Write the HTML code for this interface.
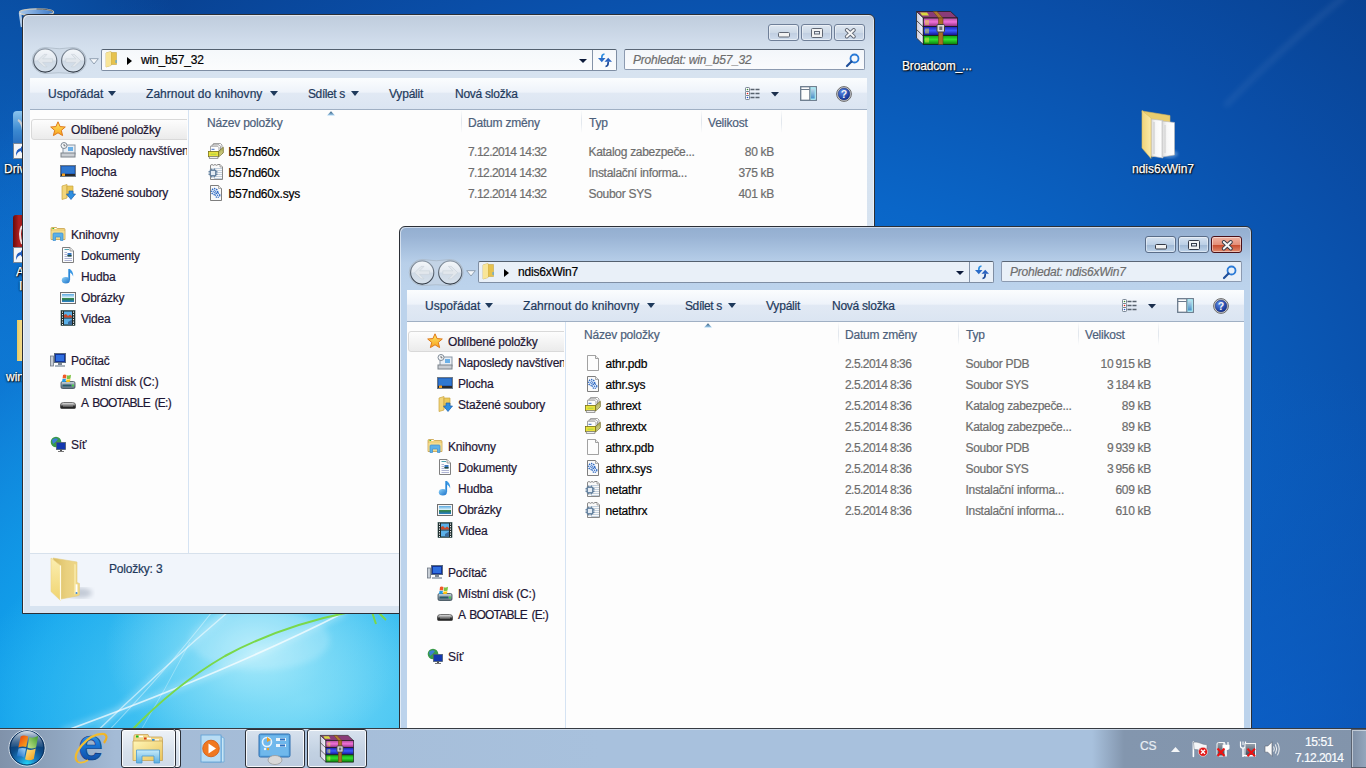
<!DOCTYPE html><html><head><meta charset="utf-8"><style>
*{margin:0;padding:0;box-sizing:border-box}
html,body{width:1366px;height:768px;overflow:hidden;font-family:"Liberation Sans", sans-serif;font-size:12px}
#desk{position:absolute;left:0;top:0;width:1366px;height:768px;overflow:hidden;
 background:
  radial-gradient(ellipse 150px 110px at 255px 650px, rgba(185,240,252,.85) 0%, rgba(150,228,248,.5) 50%, rgba(120,215,245,0) 100%),
  radial-gradient(ellipse 330px 200px at 300px 700px, rgba(110,214,246,1) 0%, rgba(70,196,242,.8) 50%, rgba(30,170,236,0) 100%),
  radial-gradient(ellipse 760px 720px at 330px 780px, rgba(34,184,242,1) 0%, rgba(18,166,238,.97) 42%, rgba(14,124,214,.62) 70%, rgba(10,80,180,0) 100%),
  radial-gradient(ellipse 420px 420px at 1250px 780px, rgba(12,100,208,.75) 0%, rgba(12,96,200,.4) 50%, rgba(10,90,190,0) 100%),
  radial-gradient(ellipse 280px 760px at 0px 600px, rgba(16,130,222,1) 0%, rgba(13,112,210,.75) 50%, rgba(10,90,190,0) 100%),
  radial-gradient(ellipse 900px 650px at 760px 450px, #0c7ad8 0%, #0a66c8 40%, #0a4ea8 75%, #08408f 100%);}
.t{position:absolute;white-space:nowrap;line-height:14px;font-size:12px;-webkit-text-stroke:0.2px currentColor;letter-spacing:-0.2px}
.ic{position:absolute;overflow:visible}
.win{position:absolute;border:1px solid #2b2f36;border-radius:6px 6px 0 0;overflow:hidden;box-shadow:inset 1px 1px 0 rgba(255,255,255,.55),inset -1px 0 0 rgba(255,255,255,.4)}
.win .t, .win .ic, .win div{}
.cb{position:absolute;border:1px solid #6f7f98;border-radius:3px;background:linear-gradient(to bottom,#dfe7f1 0%,#cdd9e7 50%,#bfcde0 51%,#cfdcec 100%);box-shadow:inset 0 0 0 1px rgba(255,255,255,.45)}
.cbact{background:linear-gradient(to bottom,#d6e2f0 0%,#bcd0e6 50%,#9fb8d4 51%,#bed3ea 100%);border-color:#5a6d88}
.cbred{border-color:#4a1018;background:linear-gradient(to bottom,#f0b2a2 0%,#e4907a 50%,#c6482a 51%,#e08a6e 100%)}
.navpill{position:absolute;border-radius:13px;background:linear-gradient(to bottom,rgba(255,255,255,.15),rgba(120,140,170,.25));border:1px solid rgba(120,135,160,.5)}
.navbtn{position:absolute;border-radius:50%;border:1.5px solid #4a5564;background:linear-gradient(to bottom,#f2f5f9 0%,#e0e7ef 50%,#cad5e1 52%,#dde6ef 100%)}
.addr{position:absolute;border:1px solid #7f8ea3;border-top-color:#53606f;border-radius:2px;background:linear-gradient(to bottom,#f5f8fb,#fbfcfd)}
.srch{position:absolute;border:1px solid #8c9ab0;border-top-color:#5a6676;border-radius:2px;background:linear-gradient(to bottom,#f3f6fa,#fafbfd)}
.client{position:absolute;background:#fdfdfd;overflow:hidden}
.tb{position:absolute;left:0;top:0;width:837px;height:32px;background:linear-gradient(to bottom,#fbfdfe 0%,#eef3fa 45%,#e1e9f4 50%,#dbe5f2 100%);border-bottom:1px solid #a0b0c4}
.navpane{position:absolute;left:0;top:32px;width:158px;height:443px;background:#fdfdfd}
.navclip{position:absolute;left:0;top:0;width:157px;height:475px;overflow:hidden}
.favbar{position:absolute;left:1px;top:41px;width:162px;height:21px;border:1px solid #d9d9d9;border-radius:3px;background:linear-gradient(to bottom,#fdfdfd,#ebebeb)}
.navdiv{position:absolute;left:158px;top:32px;width:1px;height:443px;background:#d5e3f3}
.content{position:absolute;left:0;top:0;width:837px;height:475px}
.hsep{position:absolute;top:32px;width:1px;height:23px;background:linear-gradient(to bottom,#fdfdfd,#e3e8ee 40%,#e3e8ee 60%,#fdfdfd)}
#tbar{position:absolute;left:0;top:728px;width:1366px;height:40px;background:linear-gradient(to right,#8092aa 0px,#90a6c0 60px,#a4bbd6 115px,#a8c1dd 600px,#a8c1dd 1092px,#8396ae 1124px,#8294ab 1366px)}
.tbtop{position:absolute;left:0;top:0;width:1366px;height:2px;border-top:1px solid #363b42;background:rgba(220,230,242,.75)}
.tbtn{position:absolute;top:729px;height:39px;border:1px solid #2c3038;border-radius:3px;background:linear-gradient(to bottom,#eef2f7,#d6e0eb 60%,#d0dbe8);box-shadow:inset 0 0 0 1px rgba(255,255,255,.85)}
.tbd{background:linear-gradient(to bottom,#d8e2ee,#c2d1e2 60%,#bccbde)}
.showdesk{position:absolute;left:1351px;top:729px;width:15px;height:39px;border:1px solid #5a6270;border-right:none;background:linear-gradient(to right,#7d8ea5,#95a6bc);box-shadow:inset 1px 1px 0 rgba(255,255,255,.5)}
.dt{position:absolute;white-space:nowrap;color:#fff;font-size:12px;line-height:14px;-webkit-text-stroke:0.25px #fff;text-shadow:0 1px 2px #000,0 0 2px rgba(0,0,0,.9),1px 1px 1px rgba(0,0,0,.8)}
.status{position:absolute;left:0;top:475px;width:837px;height:53px;background:#f1f5fb;border-top:1px solid #d7e1ec}
</style></head><body><div id="desk"><svg class="ic" style="left:0;top:0" width="1366" height="768" viewBox="0 0 1366 768"><defs><filter id="blur1"><feGaussianBlur stdDeviation="0.6"/></filter><filter id="blur3"><feGaussianBlur stdDeviation="3"/></filter></defs><g filter="url(#blur3)" fill="none" opacity=".5"><path d="M62 732 Q150 700 220 670 Q290 640 345 612" stroke="#ffffff" stroke-opacity=".6" stroke-width="6"/><path d="M88 740 Q160 670 228 612" stroke="#ffffff" stroke-opacity=".5" stroke-width="5"/><ellipse cx="260" cy="640" rx="70" ry="30" fill="#ffffff" fill-opacity=".35"/><path d="M1345 -4 Q1290 40 1225 106" stroke="#ffffff" stroke-opacity=".25" stroke-width="3"/></g><g filter="url(#blur1)" fill="none"><path d="M62 732 Q150 700 220 670 Q290 640 345 612" stroke="#ffffff" stroke-opacity=".7" stroke-width="1.8"/><path d="M88 740 Q160 670 228 612" stroke="#ffffff" stroke-opacity=".55" stroke-width="1.4"/><path d="M140 732 Q165 690 190 642" stroke="#ffffff" stroke-opacity=".3" stroke-width="1"/><path d="M100 740 Q165 672 212 612" stroke="#ffffff" stroke-opacity=".4" stroke-width="1.1"/><path d="M130 732 Q175 685 225 656 Q280 626 350 612" stroke="#7ad84a" stroke-width="2"/><path d="M372 612 L376 624 M378 612 L386 620" stroke="#7ad84a" stroke-width="2"/></g></svg><svg class="ic" style="left:17px;top:7px" width="40" height="22" viewBox="0 0 40 22"><defs><linearGradient id="rbg" x1="0" y1="0" x2="1" y2="0"><stop offset="0" stop-color="#a8c8ec"/><stop offset="1" stop-color="#3a78c8"/></linearGradient></defs><ellipse cx="19.5" cy="5.2" rx="17" ry="3.4" fill="url(#rbg)" stroke="#c8c8c0" stroke-width="1.3"/><path d="M19.5 2 Q33 2 36 4.5" fill="none" stroke="#5a5a58" stroke-width=".9"/><path d="M3 6 L5 20" stroke="#d8e8f8" stroke-width="2.5" opacity=".8"/></svg><svg class="ic" style="left:916px;top:11px;" width="42" height="34" viewBox="0 0 42 34"><defs><linearGradient id="rm" x1="0" y1="0" x2="0" y2="1"><stop offset="0" stop-color="#b0509c"/><stop offset=".45" stop-color="#f070d8"/><stop offset="1" stop-color="#8a2a78"/></linearGradient><linearGradient id="rb" x1="0" y1="0" x2="0" y2="1"><stop offset="0" stop-color="#2020b0"/><stop offset=".45" stop-color="#3a5aff"/><stop offset="1" stop-color="#10108a"/></linearGradient><linearGradient id="rgn" x1="0" y1="0" x2="0" y2="1"><stop offset="0" stop-color="#10a010"/><stop offset=".45" stop-color="#30e030"/><stop offset="1" stop-color="#0a7a0a"/></linearGradient><linearGradient id="rs" x1="0" y1="0" x2="1" y2="0"><stop offset="0" stop-color="#c8c8d8"/><stop offset="1" stop-color="#f8f8ff"/></linearGradient></defs><path d="M0.5 0.5 H34.6 L41.5 7 H7.3Z" fill="#8a3c78" stroke="#2a1a20" stroke-width=".8"/><path d="M4 1.5 H11 L13 4.5 H6Z" fill="#d8d840"/><path d="M0.5 0.5 L7.3 7 V33.5 L0.5 27Z" fill="url(#rs)" stroke="#2a2a2a" stroke-width=".8"/><path d="M0.5 9.5 L7.3 16 M0.5 18.5 L7.3 25" stroke="#2a2a2a" stroke-width=".8"/><rect x="7.3" y="7" width="34.2" height="8.6" fill="url(#rm)" stroke="#1a1a1a" stroke-width=".8"/><rect x="7.3" y="15.6" width="34.2" height="8.9" fill="url(#rb)" stroke="#1a1a1a" stroke-width=".8"/><rect x="7.3" y="24.5" width="34.2" height="9" fill="url(#rgn)" stroke="#1a1a1a" stroke-width=".8"/><path d="M10 9 V14 M12 9 V14 M10 17.5 V22.5 M12 17.5 V22.5 M10 26.5 V31.5 M12 26.5 V31.5" stroke="#e8e040" stroke-width="1"/><path d="M17 0.5 L21 0.5 L27 7 H22.5Z" fill="#b07830" stroke="#5a3a10" stroke-width=".5"/><rect x="22.5" y="7" width="4.5" height="26.5" fill="#a86e28" stroke="#5a3a10" stroke-width=".5"/><rect x="21" y="13.5" width="7.5" height="7.5" rx="1" fill="#d8d8d8" stroke="#404040" stroke-width="1"/><rect x="23.3" y="15.5" width="3" height="3.5" fill="#707070"/></svg><div class="dt" style="left:902px;top:59px;letter-spacing:-0.15px">Broadcom_...</div><svg class="ic" style="left:1140px;top:109px" width="40" height="52" viewBox="0 0 40 52"><defs><linearGradient id="dff" x1="0" y1="0" x2="1" y2="0"><stop offset="0" stop-color="#f0d47a"/><stop offset="1" stop-color="#fbeaa8"/></linearGradient><linearGradient id="dpp" x1="0" y1="0" x2="1" y2="0"><stop offset="0" stop-color="#d8d8d8"/><stop offset=".4" stop-color="#f8f8f8"/><stop offset="1" stop-color="#ffffff"/></linearGradient><filter id="dsh"><feGaussianBlur stdDeviation="1.5"/></filter></defs><ellipse cx="30" cy="45" rx="8" ry="4" fill="#bfe0ff" opacity=".35" filter="url(#dsh)"/><path d="M2 2 L30 6.5 V41 L12 48Z" fill="#e9cd6e" stroke="#cfb060" stroke-width=".6"/><path d="M11 10 L23 11.5 V49 L11 47Z" fill="url(#dpp)" stroke="#b8b8b8" stroke-width=".6"/><path d="M14 13 V45" stroke="#cfcfcf" stroke-width="1.2"/><path d="M22 12 L34.5 13.5 V46 L22 48Z" fill="url(#dpp)" stroke="#b8b8b8" stroke-width=".6"/><path d="M25 16 V44" stroke="#d4d4d4" stroke-width="1.2"/><path d="M2 1.5 L11 9 V49.5 L2 39Z" fill="url(#dff)" stroke="#d8bc62" stroke-width=".6"/></svg><div class="dt" style="left:1132px;top:162px">ndis6xWin7</div><div class="ic" style="left:13px;top:111px;width:12px;height:33px;background:linear-gradient(to bottom,#8ac4ee,#3a88d0 60%,#2a70c0);border-radius:4px 0 0 0"></div><svg class="ic" style="left:17px;top:118px" width="6" height="14" viewBox="0 0 6 14"><path d="M1 2 Q5 4 6 12" stroke="#c8ccd2" stroke-width="2.2" fill="none"/></svg><svg class="ic" style="left:13px;top:143px" width="10" height="16" viewBox="0 0 10 16"><rect x="0.5" y="0.5" width="11" height="15" fill="#f4f6f8" stroke="#7a8898"/><path d="M3 13 Q2.5 6 8 5 V3 L11 6.5 L8 10 V8 Q4.5 8.5 3 13Z" fill="#1e5cc0"/></svg><div class="dt" style="left:4px;top:162px">Drivers</div><div class="ic" style="left:13px;top:215px;width:12px;height:32px;background:linear-gradient(to right,#6a0a0a,#b02020 50%,#8a1010);border-radius:3px 0 0 0"></div><svg class="ic" style="left:17px;top:225px" width="6" height="20" viewBox="0 0 6 20"><path d="M5 1 Q1 8 5 19" stroke="#f0e0e0" stroke-width="2" fill="none"/></svg><svg class="ic" style="left:13px;top:247px" width="10" height="16" viewBox="0 0 10 16"><rect x="0.5" y="0.5" width="11" height="15" fill="#f4f6f8" stroke="#7a8898"/><path d="M3 13 Q2.5 6 8 5 V3 L11 6.5 L8 10 V8 Q4.5 8.5 3 13Z" fill="#1e5cc0"/></svg><div class="dt" style="left:16px;top:265px">A</div><div class="dt" style="left:19px;top:279px">I</div><div class="ic" style="left:17px;top:320px;width:8px;height:41px;background:linear-gradient(to right,#e8c860,#fbe9a8)"></div><div class="dt" style="left:6px;top:370px">win_b57_32</div><div class="win" style="left:22px;top:14px;width:853px;height:600px;background:linear-gradient(to bottom,#bfccdd 0px,#c5d2e2 10px,#cfdbea 25px,#d5e1ee 36px,#d7e3f0 60px,#d8e4f1 600px)"><div style="position:absolute;left:-1px;top:-1px;width:853px;height:600px"><div class="cb" style="left:746px;top:10px;width:31px;height:17px"><svg style="position:absolute;left:9px;top:7px" width="12" height="6" viewBox="0 0 12 6"><rect x="0.5" y="0.5" width="11" height="4.5" rx="1" fill="#f2f2f2" stroke="#5f6673" stroke-width="1"/></svg></div><div class="cb" style="left:779px;top:10px;width:31px;height:17px"><svg style="position:absolute;left:9px;top:3px" width="12" height="10" viewBox="0 0 12 10"><rect x="0.5" y="0.5" width="11" height="9" rx="1" fill="#f2f2f2" stroke="#5f6673" stroke-width="1"/><rect x="3.5" y="3.5" width="5" height="2.5" fill="#e8eef6" stroke="#5f6673" stroke-width="1"/></svg></div><div class="cb" style="left:812px;top:10px;width:31px;height:17px"><svg style="position:absolute;left:9px;top:3px" width="13" height="11" viewBox="0 0 13 11"><path d="M2.8 2 L9.8 8.6 M9.8 2 L2.8 8.6" stroke="#5f6673" stroke-width="3.8" stroke-linecap="round"/><path d="M2.8 2 L9.8 8.6 M9.8 2 L2.8 8.6" stroke="#f6f6f6" stroke-width="2" stroke-linecap="round"/></svg></div><svg class="ic" style="left:8px;top:32px" width="72" height="30" viewBox="0 0 72 30"><defs><linearGradient id="nbi" x1="0" y1="0" x2="0" y2="1"><stop offset="0" stop-color="#f4f7fa"/><stop offset=".48" stop-color="#e3e9f0"/><stop offset=".52" stop-color="#cfdae6"/><stop offset="1" stop-color="#d8e2ec"/></linearGradient><linearGradient id="nsi" x1="0" y1="0" x2="0" y2="1"><stop offset="0" stop-color="#8e9aa8"/><stop offset="1" stop-color="#2e3742"/></linearGradient></defs><path d="M15.2 1.5 Q29.2 4 43.2 1.5 A13 13 0 0 1 43.2 27.5 Q29.2 26 15.2 27.5 A13 13 0 0 1 15.2 1.5Z" fill="#c9d5e2" fill-opacity=".6" stroke="#a7b3c0" stroke-opacity=".7" stroke-width="1"/><circle cx="15.2" cy="14.5" r="11.6" fill="url(#nbi)" stroke="url(#nsi)" stroke-width="1.1"/><circle cx="43.2" cy="14.5" r="11.6" fill="url(#nbi)" stroke="url(#nsi)" stroke-width="1.1"/><path d="M7.6 14.8 L14 8.4 L17 8.4 L12.6 12.8 H22.6 V16.4 H12.6 L17 20.8 L14 20.8Z" fill="#e2e7ec" stroke="#c8d0d8" stroke-width=".6"/><path d="M50.8 14.8 L44.4 8.4 L41.4 8.4 L45.8 12.8 H35.8 V16.4 H45.8 L41.4 20.8 L44.4 20.8Z" fill="#e2e7ec" stroke="#c8d0d8" stroke-width=".6"/></svg><svg class="ic" style="left:67px;top:44px" width="10" height="7" viewBox="0 0 10 7"><path d="M0.7 0.7 H9.3 L5 6Z" fill="#f4f7fa" stroke="#8898aa" stroke-width=".9"/></svg><div class="addr" style="left:79px;top:35px;width:516px;height:22px;"></div><svg class="ic" style="left:83px;top:37px;" width="13" height="16" viewBox="0 0 13 16"><path d="M1 2 L6 0.5 V14.5 L1 16Z" fill="#f5df8a" stroke="#c6a84a" stroke-width=".6"/><path d="M6 1.5 H11.5 V13.5 H6Z" fill="#e6c24e" stroke="#c6a84a" stroke-width=".6"/><path d="M1 2 L6 0.5 V14.5 L1 16Z" fill="#f8e598"/><rect x="10.5" y="9" width="1.2" height="3" fill="#5aa8e0"/></svg><svg class="ic" style="left:105px;top:43px" width="5" height="8" viewBox="0 0 5 8"><path d="M0 0 L5 4 L0 8Z" fill="#000"/></svg><div class="t " style="left:119px;top:39px;color:#000;font-size:12px;">win_b57_32</div><svg class="ic" style="left:557px;top:45px" width="8" height="4" viewBox="0 0 8 4"><path d="M0 0 H8 L4 4Z" fill="#0c1a3a"/></svg><div style="position:absolute;left:570px;top:36px;width:1px;height:20px;background:#8493a8"></div><svg class="ic" style="left:575px;top:38px" width="16" height="16" viewBox="0 0 16 16"><path d="M7.5 2 Q4.8 2.2 4.8 5.6 L4.8 6.2" fill="none" stroke="#2f8ee0" stroke-width="1.7"/><path d="M1 6 H8.5 L4.8 10.3Z" fill="#2a6cc8"/><path d="M8.5 14.5 Q11.2 14.3 11.2 10.6 L11.2 9.6" fill="none" stroke="#1c4a9a" stroke-width="1.7"/><path d="M7.5 9.8 H15 L11.2 5.8Z" fill="#2a62c0"/></svg><div class="srch" style="left:602px;top:35px;width:241px;height:21px;"></div><div class="t " style="left:611px;top:39px;color:#6d6d6d;font-size:12px;font-style:italic;letter-spacing:-0.2px">Prohledat: win_b57_32</div><svg class="ic" style="left:824px;top:39px" width="14" height="14" viewBox="0 0 14 14"><circle cx="8.5" cy="5.5" r="4" fill="none" stroke="#2a7ad6" stroke-width="1.8"/><path d="M5.5 8.5 L1 13" stroke="#1f4f9a" stroke-width="2.2" stroke-linecap="round"/></svg><div class="client" style="left:8px;top:64px;width:837px;height:528px"><div class="tb"></div><div class="t " style="left:18px;top:9px;color:#1e395b;font-size:12px;letter-spacing:0px">Uspořádat</div><div class="t " style="left:116px;top:9px;color:#1e395b;font-size:12px;letter-spacing:0.05px">Zahrnout do knihovny</div><div class="t " style="left:278px;top:9px;color:#1e395b;font-size:12px;letter-spacing:-0.4px">Sdílet s</div><div class="t " style="left:359px;top:9px;color:#1e395b;font-size:12px;letter-spacing:-0.2px">Vypálit</div><div class="t " style="left:425px;top:9px;color:#1e395b;font-size:12px;letter-spacing:-0.25px">Nová složka</div><svg class="ic" style="left:78px;top:13px" width="8" height="5" viewBox="0 0 8 5"><path d="M0 0 H8 L4 5Z" fill="#1e395b"/></svg><svg class="ic" style="left:240px;top:13px" width="8" height="5" viewBox="0 0 8 5"><path d="M0 0 H8 L4 5Z" fill="#1e395b"/></svg><svg class="ic" style="left:320.5px;top:13px" width="8" height="5" viewBox="0 0 8 5"><path d="M0 0 H8 L4 5Z" fill="#1e395b"/></svg><svg class="ic" style="left:715px;top:9px" width="16" height="14" viewBox="0 0 16 14"><g fill="#fff" stroke="#6a7888" stroke-width=".9"><rect x="0.5" y="0.5" width="4" height="4" rx=".8"/><rect x="0.5" y="4.5" width="4" height="4" rx=".8"/><rect x="0.5" y="8.5" width="4" height="4" rx=".8"/></g><circle cx="2.5" cy="2.5" r=".8" fill="#3a8a3a"/><circle cx="2.5" cy="6.5" r=".8" fill="#e02020"/><circle cx="2.5" cy="10.5" r=".8" fill="#2050d0"/><path d="M5.5 2.5h4M10.5 2.5h4M5.5 6.5h4M10.5 6.5h4M5.5 10.5h4M10.5 10.5h4" stroke="#58626e" stroke-width="1.6"/></svg><svg class="ic" style="left:740.5px;top:13.5px" width="8" height="5" viewBox="0 0 8 5"><path d="M0 0 H8 L4 4.5Z" fill="#1a2e4c"/></svg><svg class="ic" style="left:770px;top:8px" width="17" height="15" viewBox="0 0 17 15"><defs><linearGradient id="pvg" x1="0" y1="0" x2="0" y2="1"><stop offset="0" stop-color="#c0dcea"/><stop offset="1" stop-color="#4a90c8"/></linearGradient></defs><rect x="0.7" y="0.7" width="15.6" height="13.6" fill="#fdfdfd" stroke="#6a7a8c" stroke-width="1.3"/><path d="M1 3.5 H9.5" stroke="#6a7a8c" stroke-width="1"/><rect x="10" y="1.3" width="5.7" height="12.4" fill="#9ae8f6"/><rect x="11" y="2.5" width="3.7" height="10" fill="url(#pvg)"/><path d="M9.8 1 V14" stroke="#6a7a8c" stroke-width="1.2"/></svg><svg class="ic" style="left:805px;top:7px" width="18" height="18" viewBox="0 0 18 18"><defs><radialGradient id="hg" cx=".35" cy=".3" r=".8"><stop offset="0" stop-color="#5a8ae8"/><stop offset="1" stop-color="#0c2a8a"/></radialGradient></defs><circle cx="9" cy="9" r="7.4" fill="#d4d4d4" stroke="#6a6a6a" stroke-width="1"/><circle cx="9" cy="9" r="5.9" fill="url(#hg)" stroke="#1a2a6a" stroke-width=".5"/><text x="9" y="12.8" font-family="Liberation Sans" font-weight="bold" font-size="10.5" fill="#f4f4f4" text-anchor="middle">?</text></svg><div class="navpane"></div><div class="navclip"><div class="favbar"></div><svg class="ic" style="left:20px;top:43px;" width="16" height="16" viewBox="0 0 16 16"><defs><linearGradient id="gs" x1="0" y1="0" x2="0" y2="1"><stop offset="0" stop-color="#ffe96a"/><stop offset="1" stop-color="#f7a21b"/></linearGradient></defs><path d="M8 0.8 L10.1 5.6 L15.3 6 L11.3 9.4 L12.6 14.6 L8 11.8 L3.4 14.6 L4.7 9.4 L0.7 6 L5.9 5.6 Z" fill="url(#gs)" stroke="#e07818" stroke-width="1"/></svg><div class="t " style="left:41px;top:45px;color:#1e1634;font-size:12px;">Oblíbené položky</div><svg class="ic" style="left:30px;top:64px;" width="16" height="16" viewBox="0 0 16 16"><rect x="3" y="3" width="12" height="9" fill="#e8eef5" stroke="#8a96a3"/><rect x="8" y="5" width="5" height="4" fill="#6ab0e8"/><rect x="1" y="11" width="14" height="4" fill="#c9cdd2" stroke="#7c838b"/><circle cx="4" cy="3.5" r="3" fill="#f4f6f8" stroke="#7f8a96"/><path d="M4 2 V3.8 H5.5" stroke="#555" fill="none" stroke-width=".8"/></svg><div class="t " style="left:51px;top:66px;color:#1e1634;font-size:12px;">Naposledy navštívené</div><svg class="ic" style="left:30px;top:85px;" width="16" height="16" viewBox="0 0 16 16"><rect x="0.5" y="2.5" width="15" height="11" fill="#1b4fa8" stroke="#6d7a88"/><rect x="1.5" y="3.5" width="13" height="7" fill="#2f78d0"/><rect x="1" y="11" width="14" height="2" fill="#2a2a2a"/><rect x="2" y="10.5" width="3" height="2.5" fill="#f5a020"/></svg><div class="t " style="left:51px;top:87px;color:#1e1634;font-size:12px;">Plocha</div><svg class="ic" style="left:30px;top:106px;" width="16" height="16" viewBox="0 0 16 16"><path d="M2 2 L7 0.5 L7 14 L2 15.5 Z" fill="#f2d57a" stroke="#c9a441" stroke-width=".7"/><path d="M7 2 H13 V12 H7 Z" fill="#ecc95a" stroke="#c9a441" stroke-width=".7"/><path d="M9 7 H13 V10 H15.5 L11 15.5 L6.5 10 H9 Z" fill="#2e8fe0" stroke="#1a5fb0" stroke-width=".7"/></svg><div class="t " style="left:51px;top:108px;color:#1e1634;font-size:12px;">Stažené soubory</div><svg class="ic" style="left:20px;top:148px;" width="16" height="16" viewBox="0 0 16 16"><path d="M1 2.5 Q1 1.5 2 1.5 H6.5 L7.5 2.5 H14 Q15 2.5 15 3.5 V13.5 H1Z" fill="#efd27c" stroke="#c9a24c" stroke-width=".8"/><rect x="2.5" y="2" width="1.5" height="1" fill="#30c030"/><path d="M4.5 2.5 H6.5" stroke="#fff" stroke-width="1"/><path d="M1.5 5 H14.5 V13 H1.5Z" fill="#f4dc8e"/><path d="M3 8 Q3 7 4 7 H12 Q13 7 13 8 V14.5 H10.5 V11 H5.5 V14.5 H3Z" fill="#5cb0e6" stroke="#3a8ed0" stroke-width=".7"/></svg><div class="t " style="left:41px;top:150px;color:#1e1634;font-size:12px;">Knihovny</div><svg class="ic" style="left:30px;top:169px;" width="16" height="16" viewBox="0 0 16 16"><path d="M2.5 0.5 H10 L13.5 4 V15.5 H2.5 Z" fill="#fbfcfd" stroke="#7f7f7f" stroke-width="1"/><path d="M10 0.5 V4 H13.5" fill="#eaeaea" stroke="#8a8a8a" stroke-width=".8"/><path d="M4.5 2.5 H9" stroke="#3a9aa8" stroke-width=".9"/><path d="M4.5 5.5 H7 M4.5 7.5 H7 M4.5 9.5 H7 M4.5 11.5 H12 M4.5 13.5 H12" stroke="#9aa0c8" stroke-width=".8"/><rect x="7.5" y="6" width="4" height="3.5" fill="#3a78c0"/><rect x="7.5" y="8" width="4" height="1.5" fill="#2a4a3a"/></svg><div class="t " style="left:51px;top:171px;color:#1e1634;font-size:12px;">Dokumenty</div><svg class="ic" style="left:30px;top:190px;" width="16" height="16" viewBox="0 0 16 16"><defs><linearGradient id="musg" x1="0" y1="0" x2="1" y2="1"><stop offset="0" stop-color="#8ad0f8"/><stop offset="1" stop-color="#1a70c8"/></linearGradient></defs><path d="M9.2 1 V12" stroke="#2a88d8" stroke-width="1.8"/><path d="M9.2 0.8 Q13.5 3 13.2 8.5 Q12.5 5.8 10 4.5Z" fill="#3a98e4"/><ellipse cx="5.8" cy="12.3" rx="4" ry="3.2" fill="url(#musg)"/></svg><div class="t " style="left:51px;top:192px;color:#1e1634;font-size:12px;">Hudba</div><svg class="ic" style="left:30px;top:211px;" width="16" height="16" viewBox="0 0 16 16"><defs><linearGradient id="picg" x1="0" y1="0" x2="0" y2="1"><stop offset="0" stop-color="#5aa8e0"/><stop offset=".45" stop-color="#d8f0f8"/><stop offset=".55" stop-color="#3a8a4a"/><stop offset=".7" stop-color="#2a7a6a"/><stop offset="1" stop-color="#2a80d0"/></linearGradient></defs><rect x="0.5" y="3.5" width="15" height="11" fill="#f4f6f8" stroke="#6f6f6f"/><rect x="2" y="5" width="12" height="8" fill="url(#picg)"/></svg><div class="t " style="left:51px;top:213px;color:#1e1634;font-size:12px;">Obrázky</div><svg class="ic" style="left:30px;top:232px;" width="16" height="16" viewBox="0 0 16 16"><rect x="1" y="0.5" width="14" height="15" fill="#1e2a2a" stroke="#2a4a4a" stroke-width=".6"/><rect x="4" y="1.5" width="8" height="6" fill="#5ab0e8"/><rect x="4" y="8.5" width="8" height="6" fill="#5ab0e8"/><path d="M4 5 L6 4 L8 6 L10 4.5 L12 6 V7.5 H4Z" fill="#c84a2a"/><path d="M8 12 L12 9.5 V14.5 H8Z" fill="#3a6a9a"/><path d="M2 1.5h1v1.2h-1zM2 4h1v1.2h-1zM2 6.5h1v1.2h-1zM2 9h1v1.2h-1zM2 11.5h1v1.2h-1zM2 14h1v1h-1zM13 1.5h1v1.2h-1zM13 4h1v1.2h-1zM13 6.5h1v1.2h-1zM13 9h1v1.2h-1zM13 11.5h1v1.2h-1zM13 14h1v1h-1z" fill="#f0f0f0"/></svg><div class="t " style="left:51px;top:234px;color:#1e1634;font-size:12px;">Videa</div><svg class="ic" style="left:20px;top:274px;" width="16" height="16" viewBox="0 0 16 16"><rect x="4.5" y="1.5" width="11" height="9" fill="#12339a" stroke="#5a6b80"/><rect x="6" y="3" width="8" height="6" fill="#2f6fe0"/><rect x="8" y="11" width="4" height="2" fill="#7d8895"/><rect x="5" y="13" width="10" height="2" fill="#a9b3bd"/><rect x="0.5" y="4" width="3" height="10" fill="#c7ced6" stroke="#6f7985" stroke-width=".8"/></svg><div class="t " style="left:41px;top:276px;color:#1e1634;font-size:12px;">Počítač</div><svg class="ic" style="left:30px;top:295px;" width="16" height="16" viewBox="0 0 16 16"><defs><linearGradient id="dkg" x1="0" y1="0" x2="0" y2="1"><stop offset="0" stop-color="#c8d4dc"/><stop offset="1" stop-color="#5a6e7a"/></linearGradient></defs><path d="M1 10 Q1 8.5 2.5 8.5 H13.5 Q15 8.5 15 10 V14 Q15 15.5 13.5 15.5 H2.5 Q1 15.5 1 14Z" fill="url(#dkg)" stroke="#3a4a56" stroke-width=".8"/><rect x="2.5" y="11.5" width="9" height="2" fill="#2a5a6a"/><rect x="12" y="11.5" width="1.8" height="2" fill="#40d040"/><path d="M3 2 Q4.5 1 6.5 2 L6 5.5 Q4.3 4.8 2.6 5.5Z" fill="#f05a28"/><path d="M7 2.2 Q9 3 11 1.8 L10.5 5.4 Q8.6 6.4 6.6 5.7Z" fill="#7cc242"/><path d="M2.5 6 Q4.2 5.3 5.9 6 L5.4 9 Q3.8 8.4 2 9Z" fill="#1f9ee8"/><path d="M6.5 6.2 Q8.5 7 10.4 5.9 L10 8.5 Q8.2 9.4 6.1 8.7Z" fill="#ffc20e"/></svg><div class="t " style="left:51px;top:297px;color:#1e1634;font-size:12px;">Místní disk (C:)</div><svg class="ic" style="left:30px;top:316px;" width="16" height="16" viewBox="0 0 16 16"><defs><linearGradient id="usbg" x1="0" y1="0" x2="0" y2="1"><stop offset="0" stop-color="#f0f0f0"/><stop offset=".45" stop-color="#8a8a8a"/><stop offset=".55" stop-color="#3a3a3a"/><stop offset="1" stop-color="#1a1a1a"/></linearGradient></defs><path d="M0.5 13.5 V11 Q0.5 8.5 3.5 8.5 H12.5 Q15.5 8.5 15.5 11 V13.5 Q15.5 14.5 14.5 14.5 H1.5 Q0.5 14.5 0.5 13.5Z" fill="url(#usbg)" stroke="#3a3a3a" stroke-width=".7"/><path d="M3 12 H13" stroke="#cfcfcf" stroke-width=".6"/></svg><div class="t " style="left:51px;top:318px;color:#1e1634;font-size:12px;"><span style="letter-spacing:-0.75px;word-spacing:2px">A BOOTABLE (E:)</span></div><svg class="ic" style="left:20px;top:358px;" width="16" height="16" viewBox="0 0 16 16"><circle cx="6" cy="6" r="5.3" fill="#3a9a4a"/><path d="M2 4 Q5 1 8 3 Q6 6 3 8Z" fill="#3b7fd8"/><rect x="6.5" y="6.5" width="9" height="7" fill="#1238b0" stroke="#4c5c72" stroke-width=".8"/><rect x="10" y="13.5" width="2" height="2" fill="#555"/><rect x="8" y="15" width="6" height="1" fill="#777"/></svg><div class="t " style="left:41px;top:360px;color:#1e1634;font-size:12px;">Síť</div></div><div class="navdiv"></div><div class="content"><div class="hsep" style="left:431px"></div><div class="hsep" style="left:551px"></div><div class="hsep" style="left:671px"></div><div class="hsep" style="left:751px"></div><div class="t " style="left:177px;top:38px;color:#4c607a;font-size:12px;">Název položky</div><div class="t " style="left:438px;top:38px;color:#4c607a;font-size:12px;">Datum změny</div><div class="t " style="left:559px;top:38px;color:#4c607a;font-size:12px;">Typ</div><div class="t " style="left:678px;top:38px;color:#4c607a;font-size:12px;">Velikost</div><svg class="ic" style="left:297px;top:32.5px" width="8" height="5" viewBox="0 0 8 5"><defs><linearGradient id="sag" x1="0" y1="0" x2="0" y2="1"><stop offset="0" stop-color="#2a5478"/><stop offset="1" stop-color="#a8d4f4"/></linearGradient></defs><path d="M0 4.5 L4 0.3 L8 4.5Z" fill="url(#sag)"/></svg><svg class="ic" style="left:178px;top:65px;" width="16" height="16" viewBox="0 0 16 16"><path d="M5.5 0.5 H12.5 L14 2 V7 H5.5Z" fill="#fbfbfb" stroke="#8c8c8c" stroke-width=".8"/><path d="M4 1.8 H11 L12.5 3.3 V8 H4Z" fill="#fbfbfb" stroke="#8c8c8c" stroke-width=".8"/><path d="M2.5 3.2 H9.5 L11 4.7 V9 H2.5Z" fill="#fdfdfd" stroke="#8c8c8c" stroke-width=".8"/><path d="M3.5 6.3 H6.5" stroke="#3a6ac0" stroke-width="1"/><path d="M10.5 8.5 L15.3 4.2 V9.8 L10.5 14Z" fill="#b8b868" stroke="#6a6420" stroke-width=".7"/><path d="M11.5 11 L14.5 8 M11.5 12.5 L14.5 9.5" stroke="#dcd890" stroke-width=".6"/><rect x="0.5" y="8.5" width="10" height="5.2" fill="#eae23c" stroke="#7a7418" stroke-width=".8"/><path d="M2.5 11.2 H8.5" stroke="#a8d048" stroke-width="1"/><rect x="1.3" y="13.7" width="8.6" height="1.8" fill="#f4f4f4" stroke="#7a7a7a" stroke-width=".7"/></svg><div class="t " style="left:198.5px;top:67px;color:#000;font-size:12px;">b57nd60x</div><div class="t " style="left:438px;top:67px;color:#6d6d6d;font-size:12px;letter-spacing:-0.55px">7.12.2014 14:32</div><div class="t " style="left:558.5px;top:67px;color:#6d6d6d;font-size:12px;letter-spacing:-0.3px">Katalog zabezpeče...</div><div class="t" style="left:600px;width:144px;text-align:right;top:67px;color:#6d6d6d;letter-spacing:-0.3px">80 kB</div><svg class="ic" style="left:178px;top:86px;" width="16" height="16" viewBox="0 0 16 16"><path d="M2.5 1.2 L4 0.5 L5.5 1.3 L7 0.5 L8.5 1.3 L10 0.5 L12 0.5 L14.5 3 V15.5 H2.5 Z" fill="#f9f9f9" stroke="#7a7a7a" stroke-width=".9"/><path d="M12 0.5 V3 H14.5" fill="#e6e6e6" stroke="#8a8a8a" stroke-width=".7"/><path d="M6 4.5h8M6 6.5h8M6 8.5h8M6 10.5h8M6 12.5h8M6 14.5h8" stroke="#b4c4d4" stroke-width=".8"/><rect x="2.3" y="6.3" width="5.4" height="5.4" fill="#e4ecf4" stroke="#5f7d9c" stroke-width="1.2"/><path d="M0.5 7.5h1.5M0.5 9h1.5M0.5 10.5h1.5M8 7.5h1.5M8 9h1.5M8 10.5h1.5M3.5 4.5v1.5M5 4.5v1.5M6.5 4.5v1.5M3.5 12v1.5M5 12v1.5M6.5 12v1.5" stroke="#5f7d9c" stroke-width=".9"/></svg><div class="t " style="left:198.5px;top:88px;color:#000;font-size:12px;">b57nd60x</div><div class="t " style="left:438px;top:88px;color:#6d6d6d;font-size:12px;letter-spacing:-0.55px">7.12.2014 14:32</div><div class="t " style="left:558.5px;top:88px;color:#6d6d6d;font-size:12px;letter-spacing:-0.3px">Instalační informa...</div><div class="t" style="left:600px;width:144px;text-align:right;top:88px;color:#6d6d6d;letter-spacing:-0.3px">375 kB</div><svg class="ic" style="left:178px;top:107px;" width="16" height="16" viewBox="0 0 16 16"><path d="M2.5 0.5 H10.5 L13.5 3.5 V15.5 H2.5Z" fill="#f9f9f9" stroke="#6f6f6f" stroke-width=".9"/><path d="M10.5 0.5 V3.5 H13.5" fill="#e8e8e8" stroke="#8f8f8f" stroke-width=".7"/><circle cx="6.6" cy="6.6" r="3" fill="#e6eef8" stroke="#2f6ac4" stroke-width="1.5" stroke-dasharray="1.3 .9"/><circle cx="6.6" cy="6.6" r="1" fill="none" stroke="#2f6ac4" stroke-width=".9"/><circle cx="9.6" cy="10.2" r="2.2" fill="#e6eef8" stroke="#2f6ac4" stroke-width="1.3" stroke-dasharray="1.1 .8"/><circle cx="9.6" cy="10.2" r=".7" fill="#2f6ac4"/></svg><div class="t " style="left:198.5px;top:109px;color:#000;font-size:12px;">b57nd60x.sys</div><div class="t " style="left:438px;top:109px;color:#6d6d6d;font-size:12px;letter-spacing:-0.55px">7.12.2014 14:32</div><div class="t " style="left:558.5px;top:109px;color:#6d6d6d;font-size:12px;letter-spacing:-0.3px">Soubor SYS</div><div class="t" style="left:600px;width:144px;text-align:right;top:109px;color:#6d6d6d;letter-spacing:-0.3px">401 kB</div></div><div class="status"></div><svg class="ic" style="left:14px;top:474px" width="50" height="54" viewBox="0 0 50 54"><defs><filter id="fsh"><feGaussianBlur stdDeviation="2.5"/></filter><linearGradient id="fbk" x1="0" y1="0" x2="1" y2="0"><stop offset="0" stop-color="#d9bc62"/><stop offset=".5" stop-color="#e9d07e"/><stop offset="1" stop-color="#f0d888"/></linearGradient><linearGradient id="ffr" x1="0" y1="0" x2="0" y2="1"><stop offset="0" stop-color="#fbeeb0"/><stop offset="1" stop-color="#f0d470"/></linearGradient></defs><ellipse cx="36" cy="41" rx="12" ry="5" fill="#6a7890" opacity=".35" filter="url(#fsh)"/><path d="M9 6 L33 10 V30.5 L35.5 31.5 V43 L33 44 L17 47 Z" fill="url(#fbk)" stroke="#e4cc80" stroke-width=".6"/><path d="M30 12 L32 12.4 V42 L30 42.5Z" fill="#f8e8a8" opacity=".8"/><rect x="31.6" y="32.3" width="1.9" height="9" fill="#ffffff"/><circle cx="32.5" cy="41" r="1" fill="#3a8ae0"/><path d="M7 6 L16.5 13.5 V48.5 L7 39.5 Z" fill="url(#ffr)" stroke="#ecd488" stroke-width=".6"/><path d="M16.5 13.5 V48.5" stroke="#fffbe6" stroke-width="1.2"/></svg><div class="t " style="left:79px;top:484px;color:#1e395b;font-size:12px;">Položky: 3</div></div></div></div><div class="win" style="left:399px;top:226px;width:853px;height:600px;background:linear-gradient(to bottom,#93aed0 0px,#9ab4d5 10px,#abc4e1 25px,#b8cfe9 36px,#bcd3ec 60px,#bcd3ec 600px)"><div style="position:absolute;left:-1px;top:-1px;width:853px;height:600px"><div class="cb cbact" style="left:746px;top:10px;width:31px;height:17px"><svg style="position:absolute;left:9px;top:7px" width="12" height="6" viewBox="0 0 12 6"><rect x="0.5" y="0.5" width="11" height="4.5" rx="1" fill="#f2f2f2" stroke="#343a46" stroke-width="1"/></svg></div><div class="cb cbact" style="left:779px;top:10px;width:31px;height:17px"><svg style="position:absolute;left:9px;top:3px" width="12" height="10" viewBox="0 0 12 10"><rect x="0.5" y="0.5" width="11" height="9" rx="1" fill="#f2f2f2" stroke="#343a46" stroke-width="1"/><rect x="3.5" y="3.5" width="5" height="2.5" fill="#e8eef6" stroke="#343a46" stroke-width="1"/></svg></div><div class="cb cbred cbact" style="left:812px;top:10px;width:31px;height:17px"><svg style="position:absolute;left:9px;top:3px" width="13" height="11" viewBox="0 0 13 11"><path d="M2.8 2 L9.8 8.6 M9.8 2 L2.8 8.6" stroke="#343a46" stroke-width="3.8" stroke-linecap="round"/><path d="M2.8 2 L9.8 8.6 M9.8 2 L2.8 8.6" stroke="#f6f6f6" stroke-width="2" stroke-linecap="round"/></svg></div><svg class="ic" style="left:8px;top:32px" width="72" height="30" viewBox="0 0 72 30"><defs><linearGradient id="nba" x1="0" y1="0" x2="0" y2="1"><stop offset="0" stop-color="#f4f7fa"/><stop offset=".48" stop-color="#e3e9f0"/><stop offset=".52" stop-color="#cfdae6"/><stop offset="1" stop-color="#d8e2ec"/></linearGradient><linearGradient id="nsa" x1="0" y1="0" x2="0" y2="1"><stop offset="0" stop-color="#8e9aa8"/><stop offset="1" stop-color="#2e3742"/></linearGradient></defs><path d="M15.2 1.5 Q29.2 4 43.2 1.5 A13 13 0 0 1 43.2 27.5 Q29.2 26 15.2 27.5 A13 13 0 0 1 15.2 1.5Z" fill="#c9d5e2" fill-opacity=".6" stroke="#a7b3c0" stroke-opacity=".7" stroke-width="1"/><circle cx="15.2" cy="14.5" r="11.6" fill="url(#nba)" stroke="url(#nsa)" stroke-width="1.1"/><circle cx="43.2" cy="14.5" r="11.6" fill="url(#nba)" stroke="url(#nsa)" stroke-width="1.1"/><path d="M7.6 14.8 L14 8.4 L17 8.4 L12.6 12.8 H22.6 V16.4 H12.6 L17 20.8 L14 20.8Z" fill="#e2e7ec" stroke="#c8d0d8" stroke-width=".6"/><path d="M50.8 14.8 L44.4 8.4 L41.4 8.4 L45.8 12.8 H35.8 V16.4 H45.8 L41.4 20.8 L44.4 20.8Z" fill="#e2e7ec" stroke="#c8d0d8" stroke-width=".6"/></svg><svg class="ic" style="left:67px;top:44px" width="10" height="7" viewBox="0 0 10 7"><path d="M0.7 0.7 H9.3 L5 6Z" fill="#f4f7fa" stroke="#8898aa" stroke-width=".9"/></svg><div class="addr" style="left:79px;top:35px;width:516px;height:22px;background:#e9f0f8"></div><svg class="ic" style="left:83px;top:37px;" width="13" height="16" viewBox="0 0 13 16"><path d="M1 2 L6 0.5 V14.5 L1 16Z" fill="#f5df8a" stroke="#c6a84a" stroke-width=".6"/><path d="M6 1.5 H11.5 V13.5 H6Z" fill="#e6c24e" stroke="#c6a84a" stroke-width=".6"/><path d="M1 2 L6 0.5 V14.5 L1 16Z" fill="#f8e598"/><rect x="10.5" y="9" width="1.2" height="3" fill="#5aa8e0"/></svg><svg class="ic" style="left:105px;top:43px" width="5" height="8" viewBox="0 0 5 8"><path d="M0 0 L5 4 L0 8Z" fill="#000"/></svg><div class="t " style="left:119px;top:39px;color:#000;font-size:12px;">ndis6xWin7</div><svg class="ic" style="left:557px;top:45px" width="8" height="4" viewBox="0 0 8 4"><path d="M0 0 H8 L4 4Z" fill="#0c1a3a"/></svg><div style="position:absolute;left:570px;top:36px;width:1px;height:20px;background:#8493a8"></div><svg class="ic" style="left:575px;top:38px" width="16" height="16" viewBox="0 0 16 16"><path d="M7.5 2 Q4.8 2.2 4.8 5.6 L4.8 6.2" fill="none" stroke="#2f8ee0" stroke-width="1.7"/><path d="M1 6 H8.5 L4.8 10.3Z" fill="#2a6cc8"/><path d="M8.5 14.5 Q11.2 14.3 11.2 10.6 L11.2 9.6" fill="none" stroke="#1c4a9a" stroke-width="1.7"/><path d="M7.5 9.8 H15 L11.2 5.8Z" fill="#2a62c0"/></svg><div class="srch" style="left:602px;top:35px;width:241px;height:21px;background:#e9f0f8"></div><div class="t " style="left:611px;top:39px;color:#6d6d6d;font-size:12px;font-style:italic;letter-spacing:-0.2px">Prohledat: ndis6xWin7</div><svg class="ic" style="left:824px;top:39px" width="14" height="14" viewBox="0 0 14 14"><circle cx="8.5" cy="5.5" r="4" fill="none" stroke="#2a7ad6" stroke-width="1.8"/><path d="M5.5 8.5 L1 13" stroke="#1f4f9a" stroke-width="2.2" stroke-linecap="round"/></svg><div class="client" style="left:8px;top:64px;width:837px;height:528px"><div class="tb"></div><div class="t " style="left:18px;top:9px;color:#1e395b;font-size:12px;letter-spacing:0px">Uspořádat</div><div class="t " style="left:116px;top:9px;color:#1e395b;font-size:12px;letter-spacing:0.05px">Zahrnout do knihovny</div><div class="t " style="left:278px;top:9px;color:#1e395b;font-size:12px;letter-spacing:-0.4px">Sdílet s</div><div class="t " style="left:359px;top:9px;color:#1e395b;font-size:12px;letter-spacing:-0.2px">Vypálit</div><div class="t " style="left:425px;top:9px;color:#1e395b;font-size:12px;letter-spacing:-0.25px">Nová složka</div><svg class="ic" style="left:78px;top:13px" width="8" height="5" viewBox="0 0 8 5"><path d="M0 0 H8 L4 5Z" fill="#1e395b"/></svg><svg class="ic" style="left:240px;top:13px" width="8" height="5" viewBox="0 0 8 5"><path d="M0 0 H8 L4 5Z" fill="#1e395b"/></svg><svg class="ic" style="left:320.5px;top:13px" width="8" height="5" viewBox="0 0 8 5"><path d="M0 0 H8 L4 5Z" fill="#1e395b"/></svg><svg class="ic" style="left:715px;top:9px" width="16" height="14" viewBox="0 0 16 14"><g fill="#fff" stroke="#6a7888" stroke-width=".9"><rect x="0.5" y="0.5" width="4" height="4" rx=".8"/><rect x="0.5" y="4.5" width="4" height="4" rx=".8"/><rect x="0.5" y="8.5" width="4" height="4" rx=".8"/></g><circle cx="2.5" cy="2.5" r=".8" fill="#3a8a3a"/><circle cx="2.5" cy="6.5" r=".8" fill="#e02020"/><circle cx="2.5" cy="10.5" r=".8" fill="#2050d0"/><path d="M5.5 2.5h4M10.5 2.5h4M5.5 6.5h4M10.5 6.5h4M5.5 10.5h4M10.5 10.5h4" stroke="#58626e" stroke-width="1.6"/></svg><svg class="ic" style="left:740.5px;top:13.5px" width="8" height="5" viewBox="0 0 8 5"><path d="M0 0 H8 L4 4.5Z" fill="#1a2e4c"/></svg><svg class="ic" style="left:770px;top:8px" width="17" height="15" viewBox="0 0 17 15"><defs><linearGradient id="pvg" x1="0" y1="0" x2="0" y2="1"><stop offset="0" stop-color="#c0dcea"/><stop offset="1" stop-color="#4a90c8"/></linearGradient></defs><rect x="0.7" y="0.7" width="15.6" height="13.6" fill="#fdfdfd" stroke="#6a7a8c" stroke-width="1.3"/><path d="M1 3.5 H9.5" stroke="#6a7a8c" stroke-width="1"/><rect x="10" y="1.3" width="5.7" height="12.4" fill="#9ae8f6"/><rect x="11" y="2.5" width="3.7" height="10" fill="url(#pvg)"/><path d="M9.8 1 V14" stroke="#6a7a8c" stroke-width="1.2"/></svg><svg class="ic" style="left:805px;top:7px" width="18" height="18" viewBox="0 0 18 18"><defs><radialGradient id="hg" cx=".35" cy=".3" r=".8"><stop offset="0" stop-color="#5a8ae8"/><stop offset="1" stop-color="#0c2a8a"/></radialGradient></defs><circle cx="9" cy="9" r="7.4" fill="#d4d4d4" stroke="#6a6a6a" stroke-width="1"/><circle cx="9" cy="9" r="5.9" fill="url(#hg)" stroke="#1a2a6a" stroke-width=".5"/><text x="9" y="12.8" font-family="Liberation Sans" font-weight="bold" font-size="10.5" fill="#f4f4f4" text-anchor="middle">?</text></svg><div class="navpane"></div><div class="navclip"><div class="favbar"></div><svg class="ic" style="left:20px;top:43px;" width="16" height="16" viewBox="0 0 16 16"><defs><linearGradient id="gs" x1="0" y1="0" x2="0" y2="1"><stop offset="0" stop-color="#ffe96a"/><stop offset="1" stop-color="#f7a21b"/></linearGradient></defs><path d="M8 0.8 L10.1 5.6 L15.3 6 L11.3 9.4 L12.6 14.6 L8 11.8 L3.4 14.6 L4.7 9.4 L0.7 6 L5.9 5.6 Z" fill="url(#gs)" stroke="#e07818" stroke-width="1"/></svg><div class="t " style="left:41px;top:45px;color:#1e1634;font-size:12px;">Oblíbené položky</div><svg class="ic" style="left:30px;top:64px;" width="16" height="16" viewBox="0 0 16 16"><rect x="3" y="3" width="12" height="9" fill="#e8eef5" stroke="#8a96a3"/><rect x="8" y="5" width="5" height="4" fill="#6ab0e8"/><rect x="1" y="11" width="14" height="4" fill="#c9cdd2" stroke="#7c838b"/><circle cx="4" cy="3.5" r="3" fill="#f4f6f8" stroke="#7f8a96"/><path d="M4 2 V3.8 H5.5" stroke="#555" fill="none" stroke-width=".8"/></svg><div class="t " style="left:51px;top:66px;color:#1e1634;font-size:12px;">Naposledy navštívené</div><svg class="ic" style="left:30px;top:85px;" width="16" height="16" viewBox="0 0 16 16"><rect x="0.5" y="2.5" width="15" height="11" fill="#1b4fa8" stroke="#6d7a88"/><rect x="1.5" y="3.5" width="13" height="7" fill="#2f78d0"/><rect x="1" y="11" width="14" height="2" fill="#2a2a2a"/><rect x="2" y="10.5" width="3" height="2.5" fill="#f5a020"/></svg><div class="t " style="left:51px;top:87px;color:#1e1634;font-size:12px;">Plocha</div><svg class="ic" style="left:30px;top:106px;" width="16" height="16" viewBox="0 0 16 16"><path d="M2 2 L7 0.5 L7 14 L2 15.5 Z" fill="#f2d57a" stroke="#c9a441" stroke-width=".7"/><path d="M7 2 H13 V12 H7 Z" fill="#ecc95a" stroke="#c9a441" stroke-width=".7"/><path d="M9 7 H13 V10 H15.5 L11 15.5 L6.5 10 H9 Z" fill="#2e8fe0" stroke="#1a5fb0" stroke-width=".7"/></svg><div class="t " style="left:51px;top:108px;color:#1e1634;font-size:12px;">Stažené soubory</div><svg class="ic" style="left:20px;top:148px;" width="16" height="16" viewBox="0 0 16 16"><path d="M1 2.5 Q1 1.5 2 1.5 H6.5 L7.5 2.5 H14 Q15 2.5 15 3.5 V13.5 H1Z" fill="#efd27c" stroke="#c9a24c" stroke-width=".8"/><rect x="2.5" y="2" width="1.5" height="1" fill="#30c030"/><path d="M4.5 2.5 H6.5" stroke="#fff" stroke-width="1"/><path d="M1.5 5 H14.5 V13 H1.5Z" fill="#f4dc8e"/><path d="M3 8 Q3 7 4 7 H12 Q13 7 13 8 V14.5 H10.5 V11 H5.5 V14.5 H3Z" fill="#5cb0e6" stroke="#3a8ed0" stroke-width=".7"/></svg><div class="t " style="left:41px;top:150px;color:#1e1634;font-size:12px;">Knihovny</div><svg class="ic" style="left:30px;top:169px;" width="16" height="16" viewBox="0 0 16 16"><path d="M2.5 0.5 H10 L13.5 4 V15.5 H2.5 Z" fill="#fbfcfd" stroke="#7f7f7f" stroke-width="1"/><path d="M10 0.5 V4 H13.5" fill="#eaeaea" stroke="#8a8a8a" stroke-width=".8"/><path d="M4.5 2.5 H9" stroke="#3a9aa8" stroke-width=".9"/><path d="M4.5 5.5 H7 M4.5 7.5 H7 M4.5 9.5 H7 M4.5 11.5 H12 M4.5 13.5 H12" stroke="#9aa0c8" stroke-width=".8"/><rect x="7.5" y="6" width="4" height="3.5" fill="#3a78c0"/><rect x="7.5" y="8" width="4" height="1.5" fill="#2a4a3a"/></svg><div class="t " style="left:51px;top:171px;color:#1e1634;font-size:12px;">Dokumenty</div><svg class="ic" style="left:30px;top:190px;" width="16" height="16" viewBox="0 0 16 16"><defs><linearGradient id="musg" x1="0" y1="0" x2="1" y2="1"><stop offset="0" stop-color="#8ad0f8"/><stop offset="1" stop-color="#1a70c8"/></linearGradient></defs><path d="M9.2 1 V12" stroke="#2a88d8" stroke-width="1.8"/><path d="M9.2 0.8 Q13.5 3 13.2 8.5 Q12.5 5.8 10 4.5Z" fill="#3a98e4"/><ellipse cx="5.8" cy="12.3" rx="4" ry="3.2" fill="url(#musg)"/></svg><div class="t " style="left:51px;top:192px;color:#1e1634;font-size:12px;">Hudba</div><svg class="ic" style="left:30px;top:211px;" width="16" height="16" viewBox="0 0 16 16"><defs><linearGradient id="picg" x1="0" y1="0" x2="0" y2="1"><stop offset="0" stop-color="#5aa8e0"/><stop offset=".45" stop-color="#d8f0f8"/><stop offset=".55" stop-color="#3a8a4a"/><stop offset=".7" stop-color="#2a7a6a"/><stop offset="1" stop-color="#2a80d0"/></linearGradient></defs><rect x="0.5" y="3.5" width="15" height="11" fill="#f4f6f8" stroke="#6f6f6f"/><rect x="2" y="5" width="12" height="8" fill="url(#picg)"/></svg><div class="t " style="left:51px;top:213px;color:#1e1634;font-size:12px;">Obrázky</div><svg class="ic" style="left:30px;top:232px;" width="16" height="16" viewBox="0 0 16 16"><rect x="1" y="0.5" width="14" height="15" fill="#1e2a2a" stroke="#2a4a4a" stroke-width=".6"/><rect x="4" y="1.5" width="8" height="6" fill="#5ab0e8"/><rect x="4" y="8.5" width="8" height="6" fill="#5ab0e8"/><path d="M4 5 L6 4 L8 6 L10 4.5 L12 6 V7.5 H4Z" fill="#c84a2a"/><path d="M8 12 L12 9.5 V14.5 H8Z" fill="#3a6a9a"/><path d="M2 1.5h1v1.2h-1zM2 4h1v1.2h-1zM2 6.5h1v1.2h-1zM2 9h1v1.2h-1zM2 11.5h1v1.2h-1zM2 14h1v1h-1zM13 1.5h1v1.2h-1zM13 4h1v1.2h-1zM13 6.5h1v1.2h-1zM13 9h1v1.2h-1zM13 11.5h1v1.2h-1zM13 14h1v1h-1z" fill="#f0f0f0"/></svg><div class="t " style="left:51px;top:234px;color:#1e1634;font-size:12px;">Videa</div><svg class="ic" style="left:20px;top:274px;" width="16" height="16" viewBox="0 0 16 16"><rect x="4.5" y="1.5" width="11" height="9" fill="#12339a" stroke="#5a6b80"/><rect x="6" y="3" width="8" height="6" fill="#2f6fe0"/><rect x="8" y="11" width="4" height="2" fill="#7d8895"/><rect x="5" y="13" width="10" height="2" fill="#a9b3bd"/><rect x="0.5" y="4" width="3" height="10" fill="#c7ced6" stroke="#6f7985" stroke-width=".8"/></svg><div class="t " style="left:41px;top:276px;color:#1e1634;font-size:12px;">Počítač</div><svg class="ic" style="left:30px;top:295px;" width="16" height="16" viewBox="0 0 16 16"><defs><linearGradient id="dkg" x1="0" y1="0" x2="0" y2="1"><stop offset="0" stop-color="#c8d4dc"/><stop offset="1" stop-color="#5a6e7a"/></linearGradient></defs><path d="M1 10 Q1 8.5 2.5 8.5 H13.5 Q15 8.5 15 10 V14 Q15 15.5 13.5 15.5 H2.5 Q1 15.5 1 14Z" fill="url(#dkg)" stroke="#3a4a56" stroke-width=".8"/><rect x="2.5" y="11.5" width="9" height="2" fill="#2a5a6a"/><rect x="12" y="11.5" width="1.8" height="2" fill="#40d040"/><path d="M3 2 Q4.5 1 6.5 2 L6 5.5 Q4.3 4.8 2.6 5.5Z" fill="#f05a28"/><path d="M7 2.2 Q9 3 11 1.8 L10.5 5.4 Q8.6 6.4 6.6 5.7Z" fill="#7cc242"/><path d="M2.5 6 Q4.2 5.3 5.9 6 L5.4 9 Q3.8 8.4 2 9Z" fill="#1f9ee8"/><path d="M6.5 6.2 Q8.5 7 10.4 5.9 L10 8.5 Q8.2 9.4 6.1 8.7Z" fill="#ffc20e"/></svg><div class="t " style="left:51px;top:297px;color:#1e1634;font-size:12px;">Místní disk (C:)</div><svg class="ic" style="left:30px;top:316px;" width="16" height="16" viewBox="0 0 16 16"><defs><linearGradient id="usbg" x1="0" y1="0" x2="0" y2="1"><stop offset="0" stop-color="#f0f0f0"/><stop offset=".45" stop-color="#8a8a8a"/><stop offset=".55" stop-color="#3a3a3a"/><stop offset="1" stop-color="#1a1a1a"/></linearGradient></defs><path d="M0.5 13.5 V11 Q0.5 8.5 3.5 8.5 H12.5 Q15.5 8.5 15.5 11 V13.5 Q15.5 14.5 14.5 14.5 H1.5 Q0.5 14.5 0.5 13.5Z" fill="url(#usbg)" stroke="#3a3a3a" stroke-width=".7"/><path d="M3 12 H13" stroke="#cfcfcf" stroke-width=".6"/></svg><div class="t " style="left:51px;top:318px;color:#1e1634;font-size:12px;"><span style="letter-spacing:-0.75px;word-spacing:2px">A BOOTABLE (E:)</span></div><svg class="ic" style="left:20px;top:358px;" width="16" height="16" viewBox="0 0 16 16"><circle cx="6" cy="6" r="5.3" fill="#3a9a4a"/><path d="M2 4 Q5 1 8 3 Q6 6 3 8Z" fill="#3b7fd8"/><rect x="6.5" y="6.5" width="9" height="7" fill="#1238b0" stroke="#4c5c72" stroke-width=".8"/><rect x="10" y="13.5" width="2" height="2" fill="#555"/><rect x="8" y="15" width="6" height="1" fill="#777"/></svg><div class="t " style="left:41px;top:360px;color:#1e1634;font-size:12px;">Síť</div></div><div class="navdiv"></div><div class="content"><div class="hsep" style="left:431px"></div><div class="hsep" style="left:551px"></div><div class="hsep" style="left:671px"></div><div class="hsep" style="left:751px"></div><div class="t " style="left:177px;top:38px;color:#4c607a;font-size:12px;">Název položky</div><div class="t " style="left:438px;top:38px;color:#4c607a;font-size:12px;">Datum změny</div><div class="t " style="left:559px;top:38px;color:#4c607a;font-size:12px;">Typ</div><div class="t " style="left:678px;top:38px;color:#4c607a;font-size:12px;">Velikost</div><svg class="ic" style="left:297px;top:32.5px" width="8" height="5" viewBox="0 0 8 5"><defs><linearGradient id="sag" x1="0" y1="0" x2="0" y2="1"><stop offset="0" stop-color="#2a5478"/><stop offset="1" stop-color="#a8d4f4"/></linearGradient></defs><path d="M0 4.5 L4 0.3 L8 4.5Z" fill="url(#sag)"/></svg><svg class="ic" style="left:178px;top:65px;" width="16" height="16" viewBox="0 0 16 16"><path d="M2.5 0.5 H10.5 L13.5 3.5 V15.5 H2.5Z" fill="#fdfdfd" stroke="#8a8a8a" stroke-width=".8"/><path d="M10.5 0.5 V3.5 H13.5" fill="#eee" stroke="#8a8a8a" stroke-width=".8"/></svg><div class="t " style="left:198.5px;top:67px;color:#000;font-size:12px;">athr.pdb</div><div class="t " style="left:438px;top:67px;color:#6d6d6d;font-size:12px;letter-spacing:-0.55px">2.5.2014 8:36</div><div class="t " style="left:558.5px;top:67px;color:#6d6d6d;font-size:12px;letter-spacing:-0.3px">Soubor PDB</div><div class="t" style="left:600px;width:144px;text-align:right;top:67px;color:#6d6d6d;letter-spacing:-0.3px">10&#8201;915 kB</div><svg class="ic" style="left:178px;top:86px;" width="16" height="16" viewBox="0 0 16 16"><path d="M2.5 0.5 H10.5 L13.5 3.5 V15.5 H2.5Z" fill="#f9f9f9" stroke="#6f6f6f" stroke-width=".9"/><path d="M10.5 0.5 V3.5 H13.5" fill="#e8e8e8" stroke="#8f8f8f" stroke-width=".7"/><circle cx="6.6" cy="6.6" r="3" fill="#e6eef8" stroke="#2f6ac4" stroke-width="1.5" stroke-dasharray="1.3 .9"/><circle cx="6.6" cy="6.6" r="1" fill="none" stroke="#2f6ac4" stroke-width=".9"/><circle cx="9.6" cy="10.2" r="2.2" fill="#e6eef8" stroke="#2f6ac4" stroke-width="1.3" stroke-dasharray="1.1 .8"/><circle cx="9.6" cy="10.2" r=".7" fill="#2f6ac4"/></svg><div class="t " style="left:198.5px;top:88px;color:#000;font-size:12px;">athr.sys</div><div class="t " style="left:438px;top:88px;color:#6d6d6d;font-size:12px;letter-spacing:-0.55px">2.5.2014 8:36</div><div class="t " style="left:558.5px;top:88px;color:#6d6d6d;font-size:12px;letter-spacing:-0.3px">Soubor SYS</div><div class="t" style="left:600px;width:144px;text-align:right;top:88px;color:#6d6d6d;letter-spacing:-0.3px">3&#8201;184 kB</div><svg class="ic" style="left:178px;top:107px;" width="16" height="16" viewBox="0 0 16 16"><path d="M5.5 0.5 H12.5 L14 2 V7 H5.5Z" fill="#fbfbfb" stroke="#8c8c8c" stroke-width=".8"/><path d="M4 1.8 H11 L12.5 3.3 V8 H4Z" fill="#fbfbfb" stroke="#8c8c8c" stroke-width=".8"/><path d="M2.5 3.2 H9.5 L11 4.7 V9 H2.5Z" fill="#fdfdfd" stroke="#8c8c8c" stroke-width=".8"/><path d="M3.5 6.3 H6.5" stroke="#3a6ac0" stroke-width="1"/><path d="M10.5 8.5 L15.3 4.2 V9.8 L10.5 14Z" fill="#b8b868" stroke="#6a6420" stroke-width=".7"/><path d="M11.5 11 L14.5 8 M11.5 12.5 L14.5 9.5" stroke="#dcd890" stroke-width=".6"/><rect x="0.5" y="8.5" width="10" height="5.2" fill="#eae23c" stroke="#7a7418" stroke-width=".8"/><path d="M2.5 11.2 H8.5" stroke="#a8d048" stroke-width="1"/><rect x="1.3" y="13.7" width="8.6" height="1.8" fill="#f4f4f4" stroke="#7a7a7a" stroke-width=".7"/></svg><div class="t " style="left:198.5px;top:109px;color:#000;font-size:12px;">athrext</div><div class="t " style="left:438px;top:109px;color:#6d6d6d;font-size:12px;letter-spacing:-0.55px">2.5.2014 8:36</div><div class="t " style="left:558.5px;top:109px;color:#6d6d6d;font-size:12px;letter-spacing:-0.3px">Katalog zabezpeče...</div><div class="t" style="left:600px;width:144px;text-align:right;top:109px;color:#6d6d6d;letter-spacing:-0.3px">89 kB</div><svg class="ic" style="left:178px;top:128px;" width="16" height="16" viewBox="0 0 16 16"><path d="M5.5 0.5 H12.5 L14 2 V7 H5.5Z" fill="#fbfbfb" stroke="#8c8c8c" stroke-width=".8"/><path d="M4 1.8 H11 L12.5 3.3 V8 H4Z" fill="#fbfbfb" stroke="#8c8c8c" stroke-width=".8"/><path d="M2.5 3.2 H9.5 L11 4.7 V9 H2.5Z" fill="#fdfdfd" stroke="#8c8c8c" stroke-width=".8"/><path d="M3.5 6.3 H6.5" stroke="#3a6ac0" stroke-width="1"/><path d="M10.5 8.5 L15.3 4.2 V9.8 L10.5 14Z" fill="#b8b868" stroke="#6a6420" stroke-width=".7"/><path d="M11.5 11 L14.5 8 M11.5 12.5 L14.5 9.5" stroke="#dcd890" stroke-width=".6"/><rect x="0.5" y="8.5" width="10" height="5.2" fill="#eae23c" stroke="#7a7418" stroke-width=".8"/><path d="M2.5 11.2 H8.5" stroke="#a8d048" stroke-width="1"/><rect x="1.3" y="13.7" width="8.6" height="1.8" fill="#f4f4f4" stroke="#7a7a7a" stroke-width=".7"/></svg><div class="t " style="left:198.5px;top:130px;color:#000;font-size:12px;">athrextx</div><div class="t " style="left:438px;top:130px;color:#6d6d6d;font-size:12px;letter-spacing:-0.55px">2.5.2014 8:36</div><div class="t " style="left:558.5px;top:130px;color:#6d6d6d;font-size:12px;letter-spacing:-0.3px">Katalog zabezpeče...</div><div class="t" style="left:600px;width:144px;text-align:right;top:130px;color:#6d6d6d;letter-spacing:-0.3px">89 kB</div><svg class="ic" style="left:178px;top:149px;" width="16" height="16" viewBox="0 0 16 16"><path d="M2.5 0.5 H10.5 L13.5 3.5 V15.5 H2.5Z" fill="#fdfdfd" stroke="#8a8a8a" stroke-width=".8"/><path d="M10.5 0.5 V3.5 H13.5" fill="#eee" stroke="#8a8a8a" stroke-width=".8"/></svg><div class="t " style="left:198.5px;top:151px;color:#000;font-size:12px;">athrx.pdb</div><div class="t " style="left:438px;top:151px;color:#6d6d6d;font-size:12px;letter-spacing:-0.55px">2.5.2014 8:36</div><div class="t " style="left:558.5px;top:151px;color:#6d6d6d;font-size:12px;letter-spacing:-0.3px">Soubor PDB</div><div class="t" style="left:600px;width:144px;text-align:right;top:151px;color:#6d6d6d;letter-spacing:-0.3px">9&#8201;939 kB</div><svg class="ic" style="left:178px;top:170px;" width="16" height="16" viewBox="0 0 16 16"><path d="M2.5 0.5 H10.5 L13.5 3.5 V15.5 H2.5Z" fill="#f9f9f9" stroke="#6f6f6f" stroke-width=".9"/><path d="M10.5 0.5 V3.5 H13.5" fill="#e8e8e8" stroke="#8f8f8f" stroke-width=".7"/><circle cx="6.6" cy="6.6" r="3" fill="#e6eef8" stroke="#2f6ac4" stroke-width="1.5" stroke-dasharray="1.3 .9"/><circle cx="6.6" cy="6.6" r="1" fill="none" stroke="#2f6ac4" stroke-width=".9"/><circle cx="9.6" cy="10.2" r="2.2" fill="#e6eef8" stroke="#2f6ac4" stroke-width="1.3" stroke-dasharray="1.1 .8"/><circle cx="9.6" cy="10.2" r=".7" fill="#2f6ac4"/></svg><div class="t " style="left:198.5px;top:172px;color:#000;font-size:12px;">athrx.sys</div><div class="t " style="left:438px;top:172px;color:#6d6d6d;font-size:12px;letter-spacing:-0.55px">2.5.2014 8:36</div><div class="t " style="left:558.5px;top:172px;color:#6d6d6d;font-size:12px;letter-spacing:-0.3px">Soubor SYS</div><div class="t" style="left:600px;width:144px;text-align:right;top:172px;color:#6d6d6d;letter-spacing:-0.3px">3&#8201;956 kB</div><svg class="ic" style="left:178px;top:191px;" width="16" height="16" viewBox="0 0 16 16"><path d="M2.5 1.2 L4 0.5 L5.5 1.3 L7 0.5 L8.5 1.3 L10 0.5 L12 0.5 L14.5 3 V15.5 H2.5 Z" fill="#f9f9f9" stroke="#7a7a7a" stroke-width=".9"/><path d="M12 0.5 V3 H14.5" fill="#e6e6e6" stroke="#8a8a8a" stroke-width=".7"/><path d="M6 4.5h8M6 6.5h8M6 8.5h8M6 10.5h8M6 12.5h8M6 14.5h8" stroke="#b4c4d4" stroke-width=".8"/><rect x="2.3" y="6.3" width="5.4" height="5.4" fill="#e4ecf4" stroke="#5f7d9c" stroke-width="1.2"/><path d="M0.5 7.5h1.5M0.5 9h1.5M0.5 10.5h1.5M8 7.5h1.5M8 9h1.5M8 10.5h1.5M3.5 4.5v1.5M5 4.5v1.5M6.5 4.5v1.5M3.5 12v1.5M5 12v1.5M6.5 12v1.5" stroke="#5f7d9c" stroke-width=".9"/></svg><div class="t " style="left:198.5px;top:193px;color:#000;font-size:12px;">netathr</div><div class="t " style="left:438px;top:193px;color:#6d6d6d;font-size:12px;letter-spacing:-0.55px">2.5.2014 8:36</div><div class="t " style="left:558.5px;top:193px;color:#6d6d6d;font-size:12px;letter-spacing:-0.3px">Instalační informa...</div><div class="t" style="left:600px;width:144px;text-align:right;top:193px;color:#6d6d6d;letter-spacing:-0.3px">609 kB</div><svg class="ic" style="left:178px;top:212px;" width="16" height="16" viewBox="0 0 16 16"><path d="M2.5 1.2 L4 0.5 L5.5 1.3 L7 0.5 L8.5 1.3 L10 0.5 L12 0.5 L14.5 3 V15.5 H2.5 Z" fill="#f9f9f9" stroke="#7a7a7a" stroke-width=".9"/><path d="M12 0.5 V3 H14.5" fill="#e6e6e6" stroke="#8a8a8a" stroke-width=".7"/><path d="M6 4.5h8M6 6.5h8M6 8.5h8M6 10.5h8M6 12.5h8M6 14.5h8" stroke="#b4c4d4" stroke-width=".8"/><rect x="2.3" y="6.3" width="5.4" height="5.4" fill="#e4ecf4" stroke="#5f7d9c" stroke-width="1.2"/><path d="M0.5 7.5h1.5M0.5 9h1.5M0.5 10.5h1.5M8 7.5h1.5M8 9h1.5M8 10.5h1.5M3.5 4.5v1.5M5 4.5v1.5M6.5 4.5v1.5M3.5 12v1.5M5 12v1.5M6.5 12v1.5" stroke="#5f7d9c" stroke-width=".9"/></svg><div class="t " style="left:198.5px;top:214px;color:#000;font-size:12px;">netathrx</div><div class="t " style="left:438px;top:214px;color:#6d6d6d;font-size:12px;letter-spacing:-0.55px">2.5.2014 8:36</div><div class="t " style="left:558.5px;top:214px;color:#6d6d6d;font-size:12px;letter-spacing:-0.3px">Instalační informa...</div><div class="t" style="left:600px;width:144px;text-align:right;top:214px;color:#6d6d6d;letter-spacing:-0.3px">610 kB</div></div><div class="status"></div><svg class="ic" style="left:14px;top:474px" width="50" height="54" viewBox="0 0 50 54"><defs><filter id="fsh"><feGaussianBlur stdDeviation="2.5"/></filter><linearGradient id="fbk" x1="0" y1="0" x2="1" y2="0"><stop offset="0" stop-color="#d9bc62"/><stop offset=".5" stop-color="#e9d07e"/><stop offset="1" stop-color="#f0d888"/></linearGradient><linearGradient id="ffr" x1="0" y1="0" x2="0" y2="1"><stop offset="0" stop-color="#fbeeb0"/><stop offset="1" stop-color="#f0d470"/></linearGradient></defs><ellipse cx="36" cy="41" rx="12" ry="5" fill="#6a7890" opacity=".35" filter="url(#fsh)"/><path d="M9 6 L33 10 V30.5 L35.5 31.5 V43 L33 44 L17 47 Z" fill="url(#fbk)" stroke="#e4cc80" stroke-width=".6"/><path d="M30 12 L32 12.4 V42 L30 42.5Z" fill="#f8e8a8" opacity=".8"/><rect x="31.6" y="32.3" width="1.9" height="9" fill="#ffffff"/><circle cx="32.5" cy="41" r="1" fill="#3a8ae0"/><path d="M7 6 L16.5 13.5 V48.5 L7 39.5 Z" fill="url(#ffr)" stroke="#ecd488" stroke-width=".6"/><path d="M16.5 13.5 V48.5" stroke="#fffbe6" stroke-width="1.2"/></svg></div></div></div><div id="tbar"><div class="tbtop"></div></div><svg class="ic" style="left:8px;top:729px" width="38" height="38" viewBox="0 0 38 38"><defs><radialGradient id="orb" cx=".5" cy=".95" r=".75"><stop offset="0" stop-color="#22d8f8"/><stop offset=".35" stop-color="#1a7cc0"/><stop offset=".7" stop-color="#0c4a86"/><stop offset="1" stop-color="#0a3a70"/></radialGradient><linearGradient id="orbhl" x1="0" y1="0" x2="0" y2="1"><stop offset="0" stop-color="#e8eef4" stop-opacity=".95"/><stop offset="1" stop-color="#6d8aa8" stop-opacity=".2"/></linearGradient><linearGradient id="wr" x1="0" y1="0" x2="1" y2="1"><stop offset="0" stop-color="#e83a10"/><stop offset="1" stop-color="#fbb81a"/></linearGradient><linearGradient id="wg" x1="1" y1="0" x2="0" y2="1"><stop offset="0" stop-color="#3f9a2a"/><stop offset="1" stop-color="#c8e890"/></linearGradient><linearGradient id="wb" x1="0" y1="1" x2="1" y2="0"><stop offset="0" stop-color="#0a64c4"/><stop offset="1" stop-color="#a8d8f8"/></linearGradient><linearGradient id="wy" x1="1" y1="1" x2="0" y2="0"><stop offset="0" stop-color="#f09a10"/><stop offset="1" stop-color="#ffe890"/></linearGradient></defs><circle cx="19" cy="19" r="18" fill="url(#orb)" stroke="#e6ecf2" stroke-width="1"/><circle cx="19" cy="19" r="17" fill="none" stroke="#0a2f5a" stroke-width="1"/><path d="M3 18 A16 16 0 0 1 35 18 Q19 16 3 18Z" fill="url(#orbhl)"/><g transform="translate(19.4 19.0) scale(1.16) translate(-18.3 -18.5)"><path d="M10.5 18 L12.5 8.5 Q15 7 19 8.6 L17.3 17.6 Q14 16.5 10.5 18Z" fill="url(#wr)"/><path d="M20 9 Q23 10.5 27.5 8.2 L25.8 18 Q22 19.8 18.3 18Z" fill="url(#wg)"/><path d="M9 26 L10.7 19 Q14 17.8 17.1 19 L15.5 26.8 Q12.5 25 9 26Z" fill="url(#wb)"/><path d="M18 19.5 Q21.8 21 25.5 19 L23.8 28 Q20 30 16.3 28.3Z" fill="url(#wy)"/></g></svg><svg class="ic" style="left:73px;top:731px" width="36" height="34" viewBox="0 0 36 34"><defs><linearGradient id="ieg" x1="0" y1="0" x2="0" y2="1"><stop offset="0" stop-color="#6ccaf8"/><stop offset=".5" stop-color="#1a78d8"/><stop offset="1" stop-color="#0a3a90"/></linearGradient><linearGradient id="ier" x1="0" y1="0" x2="1" y2="1"><stop offset="0" stop-color="#f8d040"/><stop offset="1" stop-color="#e89810"/></linearGradient></defs><text x="17.5" y="28.5" font-family="Liberation Sans" font-weight="bold" font-size="44" fill="url(#ieg)" text-anchor="middle" stroke="#0a3a80" stroke-width=".7">e</text><path d="M5 31 Q-1 26 9 14 Q20 2 31 3 Q36 5 31 12" fill="none" stroke="url(#ier)" stroke-width="2.2"/><path d="M5 31 Q9 33 15 29" fill="none" stroke="#f4c030" stroke-width="1.6"/></svg><div class="tbtn" style="left:175px;width:6px;border-left:none;border-radius:0 3px 3px 0"></div><div class="tbtn" style="left:121px;width:55px"></div><div class="tbtn tbd" style="left:245px;width:60px"></div><div class="tbtn tbd" style="left:307px;width:60px"></div><svg class="ic" style="left:132px;top:734px" width="32" height="30" viewBox="0 0 32 30"><defs><linearGradient id="exf" x1="0" y1="0" x2="1" y2="1"><stop offset="0" stop-color="#fff6b8"/><stop offset="1" stop-color="#eac45a"/></linearGradient><linearGradient id="exb" x1="0" y1="0" x2="0" y2="1"><stop offset="0" stop-color="#c8ecfa"/><stop offset="1" stop-color="#5aaee0"/></linearGradient></defs><path d="M2 2 Q2 0.5 3.5 0.5 H16 L17 3 H29 Q30.5 3 30.5 4.5 V9 H1.5Z" fill="#f2d88a" stroke="#c8a458" stroke-width=".8"/><rect x="4" y="1.5" width="2.5" height="2" fill="#18b818"/><rect x="12" y="3.5" width="2.5" height="2" fill="#d83a18"/><rect x="20" y="5" width="2.5" height="2" fill="#2a8ee8"/><path d="M7 2.5 H11 M15 4.5 H19 M23 6 H27" stroke="#fff" stroke-width="1.5"/><path d="M1 7 H30.5 V26.5 H1Z" fill="url(#exf)" stroke="#c8a458" stroke-width=".8"/><path d="M4.5 16 H27.5 V29 H22 V22 H10 V29 H4.5Z" fill="url(#exb)" stroke="#4a9ad4" stroke-width=".8"/></svg><svg class="ic" style="left:198px;top:734px" width="30" height="30" viewBox="0 0 30 30"><path d="M5 2 H22 L24 3 V28 H5Z" fill="#9fd0ef" stroke="#6aa8d8" stroke-width=".8"/><path d="M24 3 L26 4 V28 L24 28" fill="#c8e6f6" stroke="#6aa8d8" stroke-width=".8"/><rect x="3" y="1" width="20" height="27" fill="#b8dcf4" stroke="#5d9fd4" stroke-width=".8"/><circle cx="13" cy="14.5" r="8.3" fill="#f07820" stroke="#d4560a" stroke-width=".8"/><path d="M10.5 9.5 L18 14.5 L10.5 19.5Z" fill="#fff"/></svg><svg class="ic" style="left:258px;top:733px" width="34" height="32" viewBox="0 0 34 32"><rect x="1" y="1" width="31" height="23" rx="1.5" fill="#58a6e0" stroke="#2f6fb0" stroke-width="1"/><rect x="2.5" y="2.5" width="28" height="20" fill="#6fb8ec"/><circle cx="9" cy="9" r="4.5" fill="none" stroke="#e8f4fc" stroke-width="1.6"/><path d="M9 4 L13 7 L9 9Z" fill="#f0a020"/><rect x="18" y="5" width="10" height="3" fill="#e8f4fc"/><rect x="18" y="11" width="10" height="3" fill="#e8f4fc"/><rect x="22" y="5.5" width="5" height="2" fill="#2a70c0"/><rect x="22" y="11.5" width="5" height="2" fill="#2a70c0"/><circle cx="7" cy="16" r="1.2" fill="#e8f4fc"/><circle cx="10" cy="16" r="1.2" fill="#f0a020"/><ellipse cx="17" cy="27" rx="7" ry="4.5" fill="#d8d8d8" stroke="#9a9a9a" stroke-width=".8"/></svg><svg class="ic" style="left:320px;top:735px;" width="34" height="28" viewBox="0 0 34 28"><g transform="scale(0.81,0.81)"><defs><linearGradient id="tm" x1="0" y1="0" x2="0" y2="1"><stop offset="0" stop-color="#b0509c"/><stop offset=".45" stop-color="#f070d8"/><stop offset="1" stop-color="#8a2a78"/></linearGradient><linearGradient id="tb" x1="0" y1="0" x2="0" y2="1"><stop offset="0" stop-color="#2020b0"/><stop offset=".45" stop-color="#3a5aff"/><stop offset="1" stop-color="#10108a"/></linearGradient><linearGradient id="tgn" x1="0" y1="0" x2="0" y2="1"><stop offset="0" stop-color="#10a010"/><stop offset=".45" stop-color="#30e030"/><stop offset="1" stop-color="#0a7a0a"/></linearGradient><linearGradient id="ts" x1="0" y1="0" x2="1" y2="0"><stop offset="0" stop-color="#c8c8d8"/><stop offset="1" stop-color="#f8f8ff"/></linearGradient></defs><path d="M0.5 0.5 H34.6 L41.5 7 H7.3Z" fill="#8a3c78" stroke="#2a1a20" stroke-width=".8"/><path d="M4 1.5 H11 L13 4.5 H6Z" fill="#d8d840"/><path d="M0.5 0.5 L7.3 7 V33.5 L0.5 27Z" fill="url(#ts)" stroke="#2a2a2a" stroke-width=".8"/><path d="M0.5 9.5 L7.3 16 M0.5 18.5 L7.3 25" stroke="#2a2a2a" stroke-width=".8"/><rect x="7.3" y="7" width="34.2" height="8.6" fill="url(#tm)" stroke="#1a1a1a" stroke-width=".8"/><rect x="7.3" y="15.6" width="34.2" height="8.9" fill="url(#tb)" stroke="#1a1a1a" stroke-width=".8"/><rect x="7.3" y="24.5" width="34.2" height="9" fill="url(#tgn)" stroke="#1a1a1a" stroke-width=".8"/><path d="M10 9 V14 M12 9 V14 M10 17.5 V22.5 M12 17.5 V22.5 M10 26.5 V31.5 M12 26.5 V31.5" stroke="#e8e040" stroke-width="1"/><path d="M17 0.5 L21 0.5 L27 7 H22.5Z" fill="#b07830" stroke="#5a3a10" stroke-width=".5"/><rect x="22.5" y="7" width="4.5" height="26.5" fill="#a86e28" stroke="#5a3a10" stroke-width=".5"/><rect x="21" y="13.5" width="7.5" height="7.5" rx="1" fill="#d8d8d8" stroke="#404040" stroke-width="1"/><rect x="23.3" y="15.5" width="3" height="3.5" fill="#707070"/></g></svg><div class="t" style="left:1140px;top:739px;color:#e8eef4;font-size:12px">CS</div><svg class="ic" style="left:1171px;top:747px" width="9" height="5" viewBox="0 0 9 5"><path d="M0 5 L4.5 0 L9 5Z" fill="#f4f6f8"/></svg><svg class="ic" style="left:1185px;top:735px" width="100" height="27" viewBox="0 0 100 27"><defs><linearGradient id="trg" x1="0" y1="0" x2="0" y2="1"><stop offset="0" stop-color="#9aa4b0"/><stop offset="1" stop-color="#3a4452"/></linearGradient></defs><path d="M8.4 7 V21.5" stroke="#ffffff" stroke-width="1.6" stroke-linecap="round"/><path d="M8.4 7 L8.4 7.2 Q12 6.8 15 8 Q18 9.5 22 9.8 V16.5 Q18 16.8 15 15.5 Q12 14.2 9.2 14.6Z" fill="#f4f6f8" stroke="#6a7482" stroke-width=".5"/><circle cx="18" cy="16.8" r="4.6" fill="#e21818" stroke="#f0f0f0" stroke-width=".6"/><path d="M16 14.8 L20 18.8 M20 14.8 L16 18.8" stroke="#fff" stroke-width="1.4"/><rect x="32" y="7.5" width="8" height="13.5" rx="1.5" fill="url(#trg)" stroke="#f2f4f6" stroke-width="1"/><path d="M39 7 V10 M43 7 V10" stroke="#fff" stroke-width="1.2"/><path d="M37.5 9.8 H44.5 V13 Q44.5 15 41 15 Q37.5 15 37.5 13Z" fill="#fff"/><path d="M41 15 V21.5" stroke="#fff" stroke-width="1.6"/><path d="M32.5 13.5 L39.5 21 M39.5 13.5 L32.5 21" stroke="#f01010" stroke-width="2"/><path d="M55.5 6.5 V11 Q55.5 13 58 13 Q60.5 13 60.5 11 V6.5" fill="none" stroke="#fff" stroke-width="1.2"/><path d="M58 6.5 V10" stroke="#fff" stroke-width="1"/><path d="M58 13 V22" stroke="#fff" stroke-width="1.5"/><rect x="60" y="8.5" width="10.5" height="12.5" fill="url(#trg)" stroke="#f2f4f6" stroke-width="1"/><path d="M58 20.5 H70" stroke="#fff" stroke-width="1.2"/><path d="M62.5 13.8 L70 21.3 M70 13.8 L62.5 21.3" stroke="#f01010" stroke-width="2"/><path d="M80 11 H82.8 L87 6.8 V21.4 L82.8 17.2 H80Z" fill="#fafafa" stroke="#5a6270" stroke-width=".6"/><path d="M88.6 11.5 Q90 14 88.6 16.5" fill="none" stroke="#f4f4f4" stroke-width="1"/><path d="M90.4 9.4 Q93 14 90.4 18.6" fill="none" stroke="#f4f4f4" stroke-width="1"/><path d="M92.4 7.6 Q96 14 92.4 20.4" fill="none" stroke="#f4f4f4" stroke-width="1"/></svg><div class="t" style="left:1305px;top:735px;color:#fafcfe;font-size:12px;letter-spacing:-0.4px">15:51</div><div class="t" style="left:1295px;top:751px;color:#fafcfe;font-size:12px;letter-spacing:-0.55px">7.12.2014</div><div class="showdesk"></div></div></body></html>
